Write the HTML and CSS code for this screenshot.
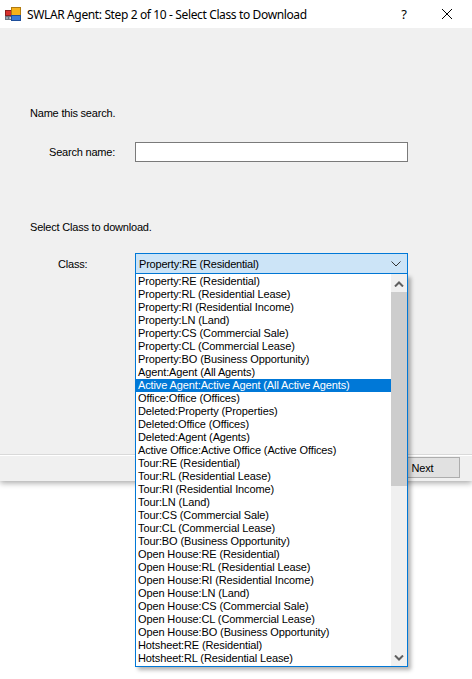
FILE: index.html
```html
<!DOCTYPE html>
<html>
<head>
<meta charset="utf-8">
<link rel="stylesheet" href="styles.css">
</head>
<body>
<div class="window">
  <div class="titlebar">
    <svg class="app-icon" width="16" height="16" viewBox="0 0 16 16">
      <rect x="0.5" y="4.5" width="6" height="5" fill="#d9302c" stroke="#8a1f1f"/>
      <rect x="0.5" y="10.5" width="3" height="3" fill="#9aa3b0" stroke="#6a7380"/>
      <rect x="4" y="10.5" width="3" height="3" fill="#c9ced6" stroke="#6a7380"/>
      <rect x="6.5" y="1.5" width="9" height="8" fill="#f6b21b" stroke="#b07a10"/>
      <rect x="6.5" y="9.5" width="9" height="5" fill="#3a7ad8" stroke="#1f4f9a"/>
    </svg>
    <span class="title">SWLAR Agent: Step 2 of 10 - Select Class to Download</span>
    <span class="help">?</span>
    <svg class="close" width="12" height="12" viewBox="0 0 12 12"><path d="M1 1L11 11M11 1L1 11" stroke="#000" stroke-width="1"/></svg>
  </div>
  <div class="client">
    <div class="content">
      <p class="heading">Name this search.</p>
      <div class="row row-search">
        <label class="lbl lbl-search">Search name:</label>
        <div class="textbox"></div>
      </div>
      <p class="heading heading-class">Select Class to download.</p>
      <div class="row row-class">
        <label class="lbl lbl-class">Class:</label>
        <div class="combo">
          <span class="combo-text">Property:RE (Residential)</span>
          <svg class="combo-arrow" width="10" height="6" viewBox="0 0 10 6"><path d="M0.5 0.5L5 5L9.5 0.5" fill="none" stroke="#333" stroke-width="1"/></svg>
        </div>
      </div>
    </div>
    <div class="footer">
      <div class="separator"></div>
      <div class="buttons">
        <button class="btn">Next</button>
      </div>
    </div>
  </div>
</div>

<div class="dropdown">
  <ul class="items">
    <li>Property:RE (Residential)</li>
    <li>Property:RL (Residential Lease)</li>
    <li>Property:RI (Residential Income)</li>
    <li>Property:LN (Land)</li>
    <li>Property:CS (Commercial Sale)</li>
    <li>Property:CL (Commercial Lease)</li>
    <li>Property:BO (Business Opportunity)</li>
    <li>Agent:Agent (All Agents)</li>
    <li class="selected">Active Agent:Active Agent (All Active Agents)</li>
    <li>Office:Office (Offices)</li>
    <li>Deleted:Property (Properties)</li>
    <li>Deleted:Office (Offices)</li>
    <li>Deleted:Agent (Agents)</li>
    <li>Active Office:Active Office (Active Offices)</li>
    <li>Tour:RE (Residential)</li>
    <li>Tour:RL (Residential Lease)</li>
    <li>Tour:RI (Residential Income)</li>
    <li>Tour:LN (Land)</li>
    <li>Tour:CS (Commercial Sale)</li>
    <li>Tour:CL (Commercial Lease)</li>
    <li>Tour:BO (Business Opportunity)</li>
    <li>Open House:RE (Residential)</li>
    <li>Open House:RL (Residential Lease)</li>
    <li>Open House:RI (Residential Income)</li>
    <li>Open House:LN (Land)</li>
    <li>Open House:CS (Commercial Sale)</li>
    <li>Open House:CL (Commercial Lease)</li>
    <li>Open House:BO (Business Opportunity)</li>
    <li>Hotsheet:RE (Residential)</li>
    <li>Hotsheet:RL (Residential Lease)</li>
  </ul>
  <div class="scrollbar">
    <div class="sb-btn">
      <svg width="10" height="6" viewBox="0 0 10 6"><path d="M1 5.5L5 1.5L9 5.5" fill="none" stroke="#606060" stroke-width="2"/></svg>
    </div>
    <div class="sb-track">
      <div class="sb-thumb"></div>
    </div>
    <div class="sb-btn">
      <svg width="10" height="6" viewBox="0 0 10 6"><path d="M1 0.5L5 4.5L9 0.5" fill="none" stroke="#606060" stroke-width="2"/></svg>
    </div>
  </div>
</div>
</body>
</html>
```

FILE: styles.css
```css
html, body {
  margin: 0;
  padding: 0;
  background: #ffffff;
}
body {
  width: 472px;
  height: 679px;
  position: relative;
  overflow: hidden;
  font-family: "Liberation Sans", Arial, sans-serif;
  font-size: 11px;
  color: #000;
}
.window {
  width: 472px;
  height: 481px;
  display: flex;
  flex-direction: column;
  box-shadow: 0 2px 6px rgba(0,0,0,0.35);
  background: #f0f0f0;
}
.titlebar {
  height: 28px;
  background: #ffffff;
  display: flex;
  align-items: center;
  flex: none;
}
.app-icon {
  margin-left: 5px;
  margin-right: 6px;
}
.title {
  font-family: "Noto Sans", "Open Sans", sans-serif;
  font-size: 12px;
  flex: 1;
  letter-spacing: -0.37px;
}
.help {
  font-family: "Noto Sans", sans-serif;
  font-size: 13px;
  width: 18px;
  text-align: center;
  margin-right: 28px;
}
.close {
  margin-left: 0;
  margin-right: 19px;
}
.client {
  flex: 1;
  display: flex;
  flex-direction: column;
  background: #f0f0f0;
}
.content {
  flex: 1;
  padding: 79px 0 0 30px;
}
.heading {
  margin: 0;
  line-height: 13px;
  letter-spacing: -0.2px;
}
.row {
  display: flex;
  align-items: center;
}
.row-search {
  margin-top: 22px;
}
.heading-class {
  margin-top: 59px;
}
.row-class {
  margin-top: 19px;
}
.lbl {
  width: 105px;
  box-sizing: border-box;
  letter-spacing: -0.2px;
}
.lbl-search {
  padding-left: 19px;
}
.lbl-class {
  padding-left: 28px;
}
.textbox {
  width: 273px;
  height: 20px;
  box-sizing: border-box;
  border: 1px solid #7a7a7a;
  background: #fff;
}
.combo {
  width: 273px;
  height: 21px;
  box-sizing: border-box;
  border: 1px solid #0078d7;
  background: #cce4f7;
  display: flex;
  align-items: center;
  justify-content: space-between;
  padding: 0 6px 0 3px;
}
.combo-text {
  letter-spacing: -0.2px;
}
.footer {
  height: 27px;
  display: flex;
  flex-direction: column;
}
.separator {
  height: 1px;
  background: #d9d9d9;
  border-bottom: 1px solid #ffffff;
}
.buttons {
  display: flex;
  justify-content: flex-end;
  padding: 1px 12px 0 0;
}
.btn {
  width: 75px;
  height: 21px;
  box-sizing: border-box;
  border: 1px solid #adadad;
  background: #e1e1e1;
  font-family: "Liberation Sans", Arial, sans-serif;
  font-size: 11px;
  padding: 0;
  letter-spacing: -0.2px;
}

.dropdown {
  position: absolute;
  left: 135px;
  top: 274px;
  width: 273px;
  height: 393px;
  box-sizing: border-box;
  border: 1px solid #0078d7;
  border-top: none;
  background: #fff;
  display: flex;
  box-shadow: 3px 3px 4px rgba(0,0,0,0.3);
}
.items {
  list-style: none;
  margin: 0;
  padding: 1px 0 0 0;
  flex: 1;
  overflow: hidden;
}
.items li {
  height: 13px;
  line-height: 13px;
  padding-left: 2px;
  white-space: nowrap;
  letter-spacing: -0.12px;
}
.items li.selected {
  background: #0078d7;
  color: #fff;
}
.scrollbar {
  width: 16px;
  background: #f0f0f0;
  display: flex;
  flex-direction: column;
  padding-top: 1px;
}
.sb-btn {
  height: 17px;
  display: flex;
  align-items: center;
  justify-content: center;
  flex: none;
}
.sb-track {
  flex: 1;
}
.sb-thumb {
  height: 194px;
  background: #cdcdcd;
  margin: 0 0 0 0;
}
```
